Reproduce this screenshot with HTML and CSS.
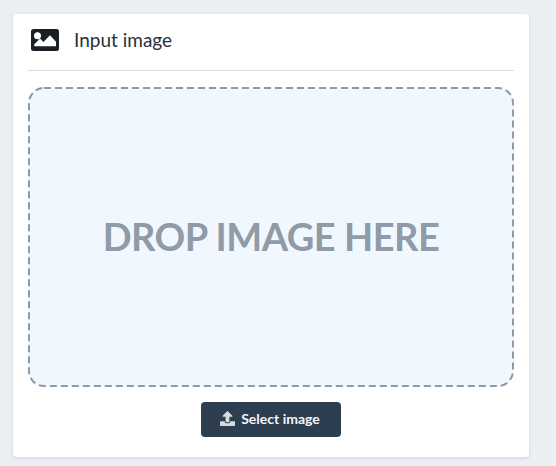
FILE: index.html
```html
<!DOCTYPE html>
<html lang="en">
<head>
<meta charset="utf-8">
<title>Input image</title>
<link rel="stylesheet" href="styles.css">
</head>
<body>
<main class="card">
  <header class="card-header">
    <svg class="header-icon" viewBox="0 0 28 22" aria-hidden="true"><path fill-rule="evenodd" d="M2.500 0h23a2.500 2.500 0 0 1 2.500 2.500v17a2.500 2.500 0 0 1-2.500 2.500h-23a2.500 2.500 0 0 1-2.500-2.500v-17a2.500 2.500 0 0 1 2.500-2.500zM6.500 3.200a3.500 3.500 0 1 0 0 7 3.500 3.500 0 0 0 0-7zM3.300 17.300h21.700v-4.600l-6-6.500-6.600 6.700-3.400-3.300-5.700 5.700z" fill="currentColor"/></svg>
    <h1 class="card-title">Input image</h1>
  </header>
  <div class="dropzone">
    <svg class="dash" viewBox="0 0 486 300" aria-hidden="true"><rect x="1" y="1" width="484" height="298" rx="15" ry="15"/></svg>
    <span class="drop-text">DROP IMAGE HERE</span>
  </div>
  <div class="actions">
    <button class="select-btn" type="button">
      <svg class="btn-icon" viewBox="0 0 512 512" aria-hidden="true"><path d="M296 384h-80c-13.300 0-24-10.700-24-24V192h-87.700c-17.800 0-26.700-21.500-14.100-34.100L242.300 5.700c7.500-7.500 19.800-7.500 27.300 0l152.200 152.200c12.600 12.600 3.700 34.100-14.100 34.100H320v168c0 13.300-10.700 24-24 24zm216-8v112c0 13.300-10.700 24-24 24H24c-13.300 0-24-10.700-24-24V376c0-13.300 10.700-24 24-24h136v8c0 30.900 25.100 56 56 56h80c30.900 0 56-25.100 56-56v-8h136c13.300 0 24 10.700 24 24z" fill="currentColor"/></svg>
      <span>Select image</span>
    </button>
  </div>
</main>
</body>
</html>
```
FILE: styles.css
```css
html, body { margin: 0; padding: 0; }
body {
  width: 556px;
  height: 466px;
  overflow: hidden;
  background: #ebeef3;
  font-family: "Lato", "Liberation Sans", sans-serif;
  padding: 14px 27px 0 13px;
  box-sizing: border-box;
}
.card {
  width: 516px;
  height: 443px;
  box-sizing: border-box;
  background: #fff;
  border-radius: 4px;
  box-shadow: 0 1px 2px 1px rgba(60, 75, 95, 0.09);
  padding: 0 15px;
  display: flex;
  flex-direction: column;
}
.card-header {
  height: 57px;
  flex: none;
  display: flex;
  align-items: center;
  gap: 15px;
  padding-left: 3px;
  padding-bottom: 5px;
  box-sizing: border-box;
  border-bottom: 1px solid #d9dde2;
}
.header-icon { width: 28px; height: 22px; flex: none; color: #1a1f26; }
.card-title { margin: 0; font-size: 19px; line-height: 24px; font-weight: 400; color: #2a3038; }
.dropzone {
  position: relative;
  margin-top: 16px;
  height: 300px;
  box-sizing: border-box;
  flex: none;
  border-radius: 16px;
  background: #f0f7ff;
  display: flex;
  align-items: center;
  justify-content: center;
  padding-bottom: 2px;
}
.dash { position: absolute; inset: 0; width: 100%; height: 100%; }
.dash rect { fill: none; stroke: #8c9ba8; stroke-width: 2; stroke-dasharray: 7 4; }
.drop-text { font-size: 38px; font-weight: 700; color: #8f9ba7; letter-spacing: -0.5px; }
.actions { display: flex; justify-content: center; margin-top: 15px; }
.select-btn {
  width: 140px;
  height: 35px;
  border: 0;
  border-radius: 4px;
  background: #2d3e50;
  color: #f4f5f7;
  font: 700 14px "Lato", "Liberation Sans", sans-serif;
  display: flex;
  align-items: center;
  justify-content: center;
  gap: 6px;
  padding: 0 2px 2px 0;
}
.btn-icon { width: 15px; height: 15px; flex: none; color: #d8dce1; }
```
